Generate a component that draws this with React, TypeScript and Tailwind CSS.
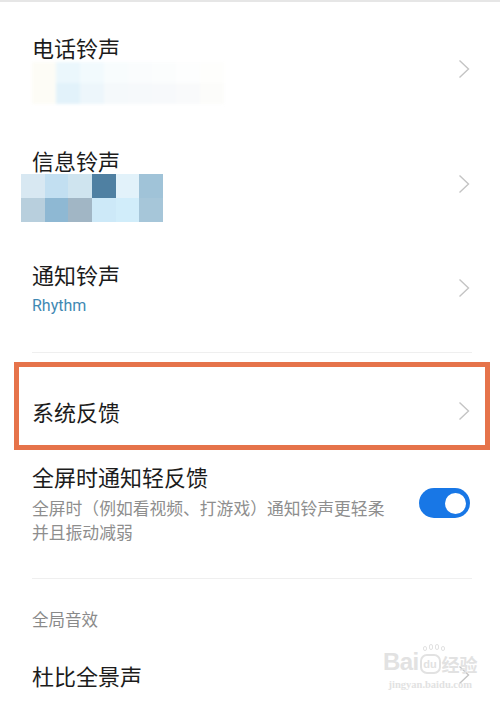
import React from "react";

const cjk = { fontFamily: '"Noto Sans CJK SC", "Noto Sans", sans-serif' };

const Chevron: React.FC<{ className?: string }> = ({ className }) => (
  <svg width="12" height="20" viewBox="0 0 12 20" className={className}>
    <path d="M1.5 1.5 L10.5 10 L1.5 18.5" fill="none" stroke="#c4c4c4" strokeWidth="1.4" />
  </svg>
);

const Divider = () => <div className="ml-[32px] mr-[28px] h-px bg-[#efefef]" />;

// pixelated (mosaic) ringtone names
const mosaicA = [
  ["#fdfcf6", "#ebf7fc", "#f2fafd", "#f8fcfd", "#fafcfd", "#fbfdfd", "#fdfefe", "#fefefc"],
  ["#fdfcf6", "#e2f2fa", "#edf6fb", "#f5f9fb", "#f6f9fb", "#f7f9fb", "#f9fafb", "#fcfcfa"],
];
const mosaicB = [
  ["#d8e8f2", "#c2dff1", "#cfe4ef", "#4f80a2", "#e2f2fa", "#a0c3d8"],
  ["#b8cfdd", "#8eb8d3", "#a1b6c5", "#cde9f8", "#d1edfa", "#a6c6d9"],
];

const App: React.FC = () => {
  return (
    <div className="relative w-[500px] h-[712px] overflow-hidden bg-white text-[#1c1c1c]" style={cjk}>
      <div className="h-[2px] bg-[#e6e6e6]" />

      {/* 电话铃声 */}
      <div className="flex items-center pl-[32px] pr-[30px] pt-[31px]">
        <div className="flex-1">
          <div className="text-[22px] leading-[28px]">电话铃声</div>
          <div className="mt-px flex flex-col blur-[1.5px]">
            {mosaicA.map((row, i) => (
              <div key={i} className="flex">
                {row.map((c, j) => (
                  <div key={j} className="w-[24px] h-[21px]" style={{ background: c }} />
                ))}
              </div>
            ))}
          </div>
        </div>
        <Chevron />
      </div>

      {/* 信息铃声 */}
      <div className="flex items-center pl-[32px] pr-[30px] pt-[42px]">
        <div className="flex-1">
          <div className="text-[22px] leading-[28px]">信息铃声</div>
          <div className="-ml-[11px] flex flex-col">
            {mosaicB.map((row, i) => (
              <div key={i} className="flex">
                {row.map((c, j) => (
                  <div key={j} className="w-[23.7px] h-[24px]" style={{ background: c }} />
                ))}
              </div>
            ))}
          </div>
        </div>
        <Chevron />
      </div>

      {/* 通知铃声 */}
      <div className="flex items-center pl-[32px] pr-[30px] pt-[38px]">
        <div className="flex-1">
          <div className="text-[22px] leading-[28px]">通知铃声</div>
          <div className="mt-[8px] text-[16px] leading-[20px] text-[#3f89b3]" style={{ fontFamily: "Roboto, sans-serif" }}>
            Rhythm
          </div>
        </div>
        <Chevron />
      </div>

      <div className="pt-[36px]">
        <Divider />
      </div>

      {/* 系统反馈 (highlighted) */}
      <div className="ml-[14px] mr-[10px] mt-[9px] border-[5px] border-[#e6734a] flex items-center pl-[13px] pr-[15px] pt-[30px] pb-[20px]">
        <div className="flex-1 text-[22px] leading-[28px]">系统反馈</div>
        <Chevron />
      </div>

      {/* 全屏时通知轻反馈 */}
      <div className="flex items-center pl-[32px] pr-[30px] pt-[12px]">
        <div className="flex-1">
          <div className="text-[22px] leading-[28px]">全屏时通知轻反馈</div>
          <div className="mt-[6px] w-[360px] text-[16.8px] leading-[24px] text-[#8e8e8e]">
            全屏时（例如看视频、打游戏）通知铃声更轻柔并且振动减弱
          </div>
        </div>
        <div className="flex items-center justify-end pr-[4px] w-[51px] h-[30px] rounded-full bg-[#1877e6]">
          <div className="w-[21px] h-[21px] rounded-full bg-white" />
        </div>
      </div>

      <div className="pt-[34px]">
        <Divider />
      </div>

      <div className="pl-[32px] pt-[29px] text-[16.5px] leading-[22px] text-[#8a8a8a]">全局音效</div>

      {/* 杜比全景声 */}
      <div className="flex items-center pl-[32px] pr-[30px] pt-[31px]">
        <div className="flex-1 text-[22px] leading-[28px]">杜比全景声</div>
        <Chevron />
      </div>

      {/* Baidu watermark */}
      <div className="absolute left-[383px] top-[650px] flex flex-col items-center whitespace-nowrap text-[#e2e2e2]">
        <div className="flex items-end leading-none">
          <span className="text-[24px] font-bold tracking-tight" style={{ fontFamily: '"Liberation Sans", sans-serif' }}>Bai</span>
          <span className="relative mx-[1px] flex items-center justify-center w-[21px] h-[20px] rounded-[7px] border-2 border-[#e2e2e2] text-[11px] font-bold" style={{ fontFamily: '"Liberation Sans", sans-serif' }}>
            du
            <span className="absolute -top-[10px] left-[1px] flex gap-[2px]">
              <span className="w-[4px] h-[5px] rounded-full border border-[#e2e2e2]" />
              <span className="w-[4px] h-[6px] -mt-[2px] rounded-full border border-[#e2e2e2]" />
              <span className="w-[4px] h-[6px] -mt-[2px] rounded-full border border-[#e2e2e2]" />
              <span className="w-[4px] h-[5px] rounded-full border border-[#e2e2e2]" />
            </span>
          </span>
          <span className="text-[18px] leading-[20px] font-bold">经验</span>
        </div>
        <div className="mt-[5px] text-[10.5px] leading-[12px] font-bold" style={{ fontFamily: '"Liberation Serif", serif' }}>
          jingyan.baidu.com
        </div>
      </div>
    </div>
  );
};

export default App;
